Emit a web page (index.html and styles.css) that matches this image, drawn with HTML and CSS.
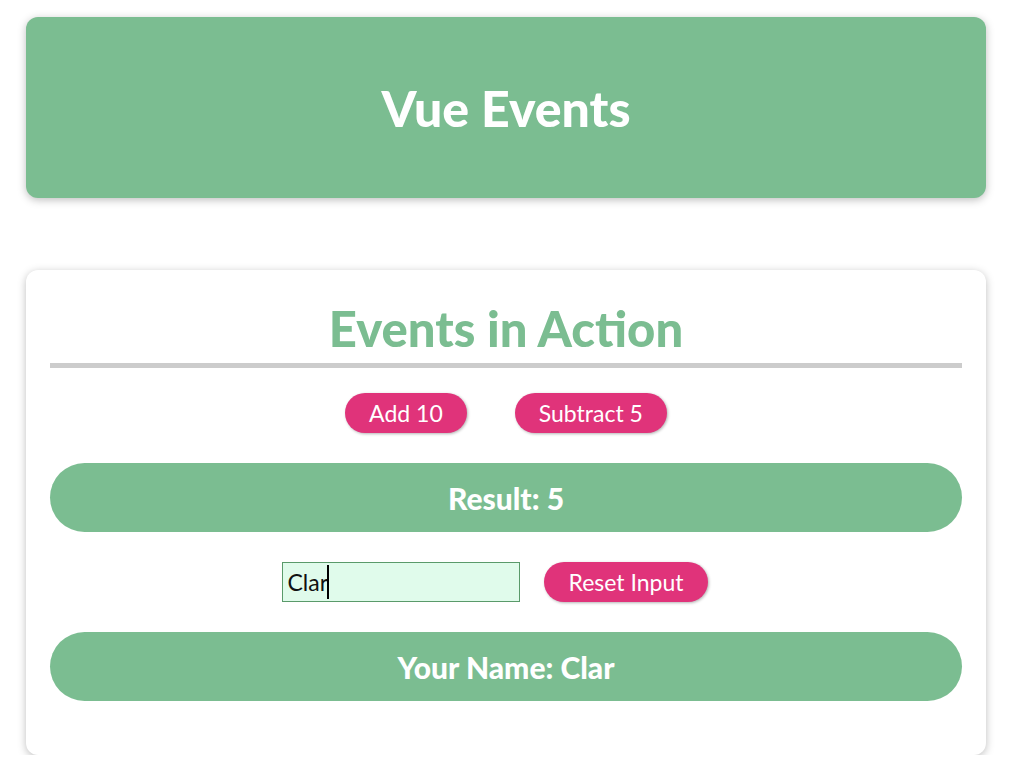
FILE: index.html
```html
<!DOCTYPE html>
<html lang="en">
<head>
<meta charset="utf-8">
<title>Vue Events</title>
<link rel="stylesheet" href="styles.css">
</head>
<body>
<div class="page">
  <header class="hero">
    <h1 class="hero-title">Vue Events</h1>
  </header>
  <section class="events">
    <h2 class="events-title">Events in Action</h2>
    <div class="row row-buttons">
      <button class="btn">Add 10</button>
      <button class="btn">Subtract 5</button>
    </div>
    <p class="bar">Result: 5</p>
    <div class="row row-input">
      <div class="input-wrap">
        <input class="name-input" type="text" value="Clar">
        <span class="caret"></span>
      </div>
      <button class="btn">Reset Input</button>
    </div>
    <p class="bar">Your Name: Clar</p>
  </section>
</div>
</body>
</html>
```
FILE: styles.css
```css
* { box-sizing: border-box; }
html { font-family: "Lato", "Noto Sans", sans-serif; }
body { margin: 0; background: #ffffff; }
.page {
  width: 960px;
  margin: 17px 0 0 26px;
  display: flex;
  flex-direction: column;
  gap: 72px;
}
.hero {
  height: 181px;
  border-radius: 12px;
  background: #7bbd91;
  box-shadow: 0 2px 8px rgba(0,0,0,0.26);
  display: flex;
  align-items: center;
  justify-content: center;
}
.hero-title {
  margin: 0;
  color: #ffffff;
  font-size: 50px;
  font-weight: 900;
}
.events {
  height: 485px;
  border-radius: 12px;
  background: #fff;
  box-shadow: 0 2px 8px rgba(0,0,0,0.26);
  padding: 24px 24px 0;
  display: flex;
  flex-direction: column;
  align-items: stretch;
}
.events-title {
  margin: 0;
  height: 74px;
  line-height: 69px;
  text-align: center;
  color: #7bbd91;
  font-size: 49px;
  font-weight: 900;
  border-bottom: 5px solid #cccccc;
}
.row {
  display: flex;
  justify-content: center;
  align-items: center;
}
.row-buttons { margin-top: 25px; gap: 48px; }
.row-input { margin-top: 30px; gap: 24px; padding-right: 22px; }
.btn {
  height: 40px;
  padding: 0 24px;
  border: none;
  border-radius: 20px;
  background: #e0337a;
  color: #fff;
  font-family: inherit;
  font-size: 23px;
  box-shadow: 1px 1px 3px rgba(0,0,0,0.3);
}
.bar {
  margin: 30px 0 0;
  height: 69px;
  border-radius: 35px;
  background: #7bbd91;
  color: #fff;
  font-size: 30px;
  font-weight: 900;
  display: flex;
  align-items: center;
  justify-content: center;
}
.input-wrap { position: relative; }
.name-input {
  display: block;
  width: 238px;
  height: 40px;
  padding: 0 4px;
  border: 1px solid #5a9a6a;
  background: #e0fbeb;
  font-family: inherit;
  font-size: 23px;
  color: #111;
  outline: none;
}
.caret {
  position: absolute;
  left: 45px;
  top: 3px;
  width: 2px;
  height: 34px;
  background: #000;
}
```
